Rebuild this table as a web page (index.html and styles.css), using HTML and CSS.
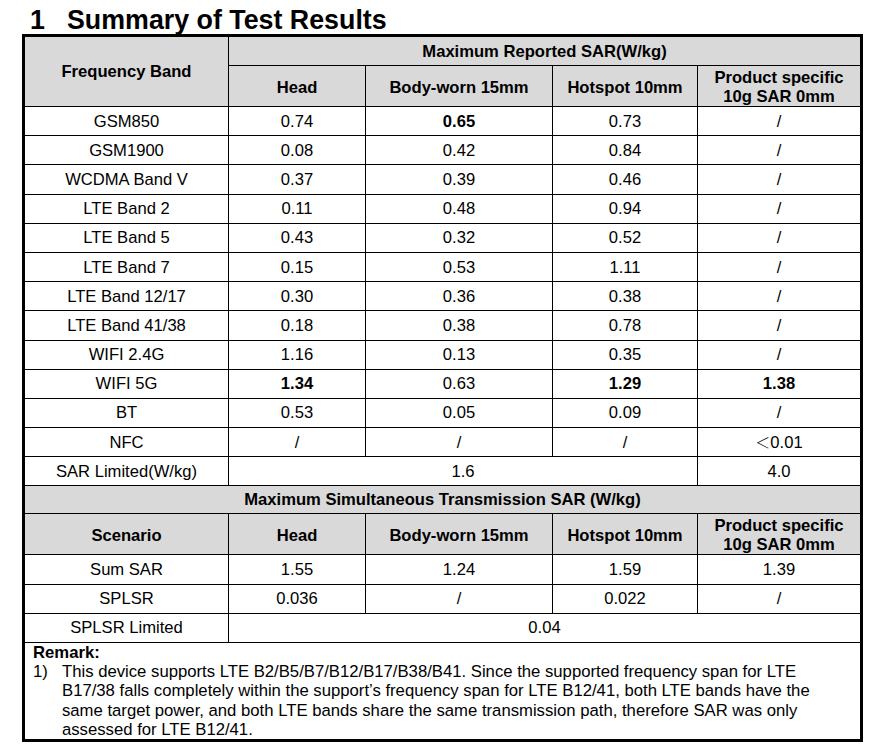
FILE: index.html
```html
<!DOCTYPE html>
<html>
<head>
<meta charset="utf-8">
<link rel="stylesheet" href="styles.css">
</head>
<body>
<h1 class="title"><span class="num">1</span>Summary of Test Results</h1>
<div class="frame">
<table class="sar">
<colgroup><col class="c1"><col class="c2"><col class="c3"><col class="c4"><col class="c5"></colgroup>
<tr class="hr1"><th rowspan="2">Frequency Band</th><th colspan="4">Maximum Reported SAR(W/kg)</th></tr>
<tr class="hr2"><th>Head</th><th>Body-worn 15mm</th><th>Hotspot 10mm</th><th class="two">Product specific<br>10g SAR 0mm</th></tr>
<tr><td>GSM850</td><td>0.74</td><td class="b">0.65</td><td>0.73</td><td>/</td></tr>
<tr><td>GSM1900</td><td>0.08</td><td>0.42</td><td>0.84</td><td>/</td></tr>
<tr><td>WCDMA Band V</td><td>0.37</td><td>0.39</td><td>0.46</td><td>/</td></tr>
<tr><td>LTE Band 2</td><td>0.11</td><td>0.48</td><td>0.94</td><td>/</td></tr>
<tr><td>LTE Band 5</td><td>0.43</td><td>0.32</td><td>0.52</td><td>/</td></tr>
<tr><td>LTE Band 7</td><td>0.15</td><td>0.53</td><td>1.11</td><td>/</td></tr>
<tr><td>LTE Band 12/17</td><td>0.30</td><td>0.36</td><td>0.38</td><td>/</td></tr>
<tr><td>LTE Band 41/38</td><td>0.18</td><td>0.38</td><td>0.78</td><td>/</td></tr>
<tr><td>WIFI 2.4G</td><td>1.16</td><td>0.13</td><td>0.35</td><td>/</td></tr>
<tr><td>WIFI 5G</td><td class="b">1.34</td><td>0.63</td><td class="b">1.29</td><td class="b">1.38</td></tr>
<tr><td>BT</td><td>0.53</td><td>0.05</td><td>0.09</td><td>/</td></tr>
<tr><td>NFC</td><td>/</td><td>/</td><td>/</td><td><span class="lt">＜</span>0.01</td></tr>
<tr><td>SAR Limited(W/kg)</td><td colspan="3">1.6</td><td>4.0</td></tr>
<tr class="hr3"><th colspan="5">Maximum Simultaneous Transmission SAR (W/kg)</th></tr>
<tr class="hr2 hr2b"><th>Scenario</th><th>Head</th><th>Body-worn 15mm</th><th>Hotspot 10mm</th><th class="two">Product specific<br>10g SAR 0mm</th></tr>
<tr><td>Sum SAR</td><td>1.55</td><td>1.24</td><td>1.59</td><td>1.39</td></tr>
<tr><td>SPLSR</td><td>0.036</td><td>/</td><td>0.022</td><td>/</td></tr>
<tr><td>SPLSR Limited</td><td colspan="4">0.04</td></tr>
<tr class="remark-row"><td colspan="5" class="remark">
<div class="remark-title">Remark:</div>
<div class="note"><span class="note-num">1)</span><span class="note-text">This device supports LTE B2/B5/B7/B12/B17/B38/B41. Since the supported frequency span for LTE B17/38 falls completely within the support’s frequency span for LTE B12/41, both LTE bands have the same target power, and both LTE bands share the same transmission path, therefore SAR was only assessed for LTE B12/41.</span></div>
</td></tr>
</table>
</div>
</body>
</html>
```
FILE: styles.css
```css
html, body {
  margin: 0;
  padding: 0;
  background: #ffffff;
  color: #000000;
  font-family: "Liberation Sans", Arial, "Noto Sans CJK SC", sans-serif;
}

.title {
  margin: 0;
  padding: 6px 0 0 30px;
  height: 28px;
  font-size: 26.8px;
  line-height: 28px;
  font-weight: bold;
  white-space: nowrap;
}

.title .num {
  display: inline-block;
  width: 37px;
}

.frame {
  margin-left: 22px;
  width: 835px;
  border: 3px solid #000;
}

.sar {
  width: 835px;
  table-layout: fixed;
  border-collapse: collapse;
  border-style: hidden;
  font-size: 16.6px;
}

.c1 { width: 203.5px; }
.c2 { width: 137px; }
.c3 { width: 187px; }
.c4 { width: 145px; }
.c5 { width: 162.5px; }

.sar th,
.sar td {
  border: 1px solid #000;
  padding: 0;
  text-align: center;
  vertical-align: middle;
  line-height: 19px;
  height: 28.2px;
}

.sar th {
  background: #d9d9d9;
  font-weight: bold;
}

.sar .hr1 th { height: 28px; }
.sar .hr2 th { height: 37px; padding-top: 2px; }
.sar .hr2b th { height: 36px; padding-top: 2px; }
.sar .hr3 th { height: 27px; }

.sar .b { font-weight: bold; }

.lt {
  font-family: "Noto Sans CJK SC", sans-serif;
  font-size: 15px;
  font-weight: 300;
}

.sar td.remark {
  text-align: left;
  vertical-align: top;
  padding: 0 30px 0 8px;
  height: auto;
  font-size: 16.7px;
  line-height: 19.2px;
}

.remark-title {
  font-weight: bold;
}

.note {
  display: flex;
}

.note-num {
  flex: 0 0 29px;
}

.note-text {
  flex: 1 1 auto;
}
```
